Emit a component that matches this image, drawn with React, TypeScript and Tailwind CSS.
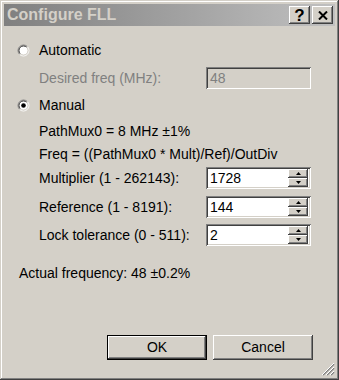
import React from "react";

const FONT = "font-['Liberation_Sans',Arial,sans-serif]";
const RAISED =
  "shadow-[inset_-1px_-1px_0_#404040,inset_1px_1px_0_#ffffff,inset_-2px_-2px_0_#808080,inset_2px_2px_0_#d4d0c8]";
const SUNKEN =
  "shadow-[inset_1px_1px_0_#808080,inset_-1px_-1px_0_#ffffff,inset_2px_2px_0_#404040,inset_-2px_-2px_0_#d4d0c8]";

function Radio({ checked }: { checked?: boolean }) {
  return (
    <svg width="13" height="13" viewBox="0 0 13 13" className="shrink-0">
      <circle cx="6.5" cy="6.5" r="4.5" fill="#ffffff" />
      <path d="M2.611 10.389 A5.5 5.5 0 0 1 10.389 2.611" stroke="#808080" fill="none" />
      <path d="M10.389 2.611 A5.5 5.5 0 0 1 2.611 10.389" stroke="#ffffff" fill="none" />
      <path d="M3.318 9.682 A4.5 4.5 0 0 1 9.682 3.318" stroke="#404040" fill="none" />
      <path d="M9.682 3.318 A4.5 4.5 0 0 1 3.318 9.682" stroke="#d4d0c8" fill="none" />
      {checked && <circle cx="6.5" cy="6.5" r="2.3" fill="#000000" />}
    </svg>
  );
}

function SpinButton({ down }: { down?: boolean }) {
  return (
    <div className={`w-[20px] h-[9px] bg-[#d4d0c8] flex items-center justify-center ${RAISED}`}>
      <svg width="5" height="3" viewBox="0 0 5 3">
        <path d={down ? "M0 0 H5 L2.5 3 Z" : "M0 3 H5 L2.5 0 Z"} fill="#000000" />
      </svg>
    </div>
  );
}

function Field({
  value,
  disabled,
  spin,
}: {
  value: string;
  disabled?: boolean;
  spin?: boolean;
}) {
  return (
    <div
      className={`w-[105px] h-[22px] p-[2px] flex items-stretch ${SUNKEN} ${
        disabled ? "bg-[#d4d0c8] text-[#808080]" : "bg-white text-black"
      }`}
    >
      <span className="flex-1 pl-[2px] flex items-center leading-none">{value}</span>
      {spin && (
        <div className="flex flex-col mr-[1px]">
          <SpinButton />
          <SpinButton down />
        </div>
      )}
    </div>
  );
}

function FieldRow({ label, value, className = "" }: { label: string; value: string; className?: string }) {
  return (
    <div className={`flex items-center ml-[35px] ${className}`}>
      <span className="w-[167px]">{label}</span>
      <Field value={value} spin />
    </div>
  );
}

function WinButton({ label, isDefault }: { label: string; isDefault?: boolean }) {
  return (
    <div className={`w-[100px] h-[25px] bg-[#d4d0c8] ${isDefault ? "border border-black" : ""}`}>
      <div className={`w-full h-full flex items-center justify-center ${RAISED}`}>{label}</div>
    </div>
  );
}

export default function App() {
  return (
    <div
      className={`w-[339px] h-[380px] bg-[#d4d0c8] p-[4px] flex flex-col text-[14px] text-black ${FONT} shadow-[inset_-1px_-1px_0_#404040,inset_1px_1px_0_#d4d0c8,inset_-2px_-2px_0_#808080,inset_2px_2px_0_#ffffff]`}
    >
      <div className="h-[22px] shrink-0 flex items-center justify-between pl-[3px] pr-[2px] bg-gradient-to-r from-[#808080] to-[#c0c0c0]">
        <span className="font-bold text-[16px] text-[#d4d0c8]">Configure FLL</span>
        <div className="flex gap-[2px]">
          <div className={`w-[21px] h-[18px] bg-[#d4d0c8] flex items-center justify-center font-bold text-[17px] leading-none ${RAISED}`}>
            ?
          </div>
          <div className={`w-[21px] h-[18px] bg-[#d4d0c8] flex items-center justify-center ${RAISED}`}>
            <svg width="10" height="9" viewBox="0 0 10 9">
              <path d="M1 0.5 L9 8.5 M9 0.5 L1 8.5" stroke="#000000" strokeWidth="2" />
            </svg>
          </div>
        </div>
      </div>

      <div className="relative flex-1 flex flex-col">
        <div className="h-[20px] mt-[14px] flex items-center ml-[13px] gap-[9px]">
          <Radio />
          <span>Automatic</span>
        </div>
        <div className="flex items-center ml-[35px] mt-[7px]">
          <span className="w-[167px] text-[#808080]">Desired freq (MHz):</span>
          <Field value="48" disabled />
        </div>
        <div className="h-[20px] mt-[6px] flex items-center ml-[13px] gap-[9px]">
          <Radio checked />
          <span>Manual</span>
        </div>
        <div className="h-[20px] mt-[6px] flex items-center ml-[35px]">PathMux0 = 8 MHz ±1%</div>
        <div className="h-[20px] mt-[3px] flex items-center ml-[35px]">Freq = ((PathMux0 * Mult)/Ref)/OutDiv</div>
        <FieldRow className="mt-[3px]" label="Multiplier (1 - 262143):" value="1728" />
        <FieldRow className="mt-[7px]" label="Reference (1 - 8191):" value="144" />
        <FieldRow className="mt-[6px]" label="Lock tolerance (0 - 511):" value="2" />
        <div className="h-[20px] mt-[17px] flex items-center ml-[15px]">Actual frequency: 48 ±0.2%</div>

        <div className="mt-[52px] flex gap-[6px] ml-[103px]">
          <WinButton label="OK" isDefault />
          <WinButton label="Cancel" />
        </div>

        <svg width="13" height="13" viewBox="0 0 13 13" className="absolute right-0 bottom-0">
          <path d="M12 1 L1 12 M12 5 L5 12 M12 9 L9 12" stroke="#808080" strokeWidth="1.5" />
          <path d="M12 0 L0 12 M12 4 L4 12 M12 8 L8 12" stroke="#ffffff" strokeWidth="1" />
        </svg>
      </div>
    </div>
  );
}
